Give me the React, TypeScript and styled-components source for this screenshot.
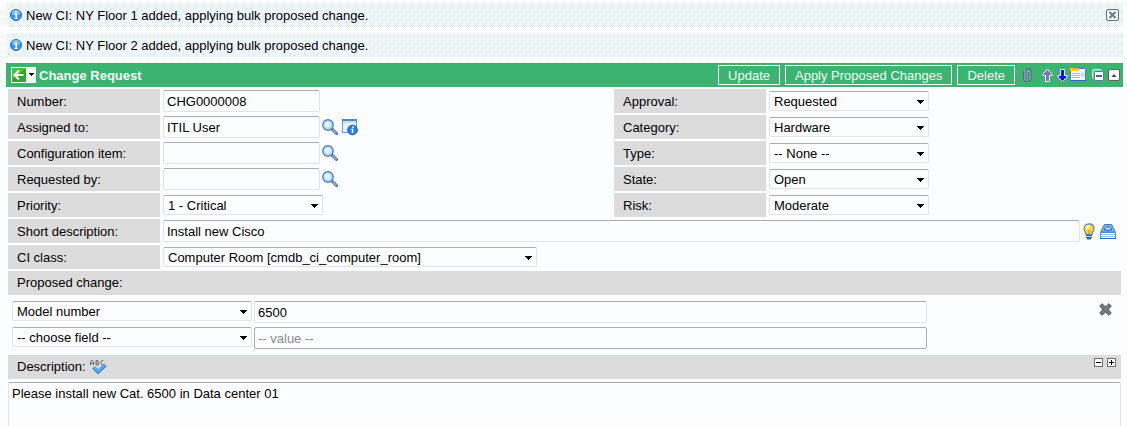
import React from "react";
import styled, { createGlobalStyle, css } from "styled-components";

const GlobalStyle = createGlobalStyle`
  *, *::before, *::after { box-sizing: border-box; }
  body {
    margin: 0;
    background: #fcfdff;
    color: #000;
    font: 13px/16px "Liberation Sans", Arial, sans-serif;
  }
`;

const Page = styled.div`
  display: flex;
  flex-direction: column;
  height: 100vh;
  overflow: hidden;
  padding: 3px 4px 0 6px;
`;

const Message = styled.div`
  display: flex;
  align-items: center;
  flex: none;
  gap: 4px;
  height: 24px;
  margin-bottom: 6px;
  padding: 0 4px;
  background: repeating-conic-gradient(#e2f1f9 0 25%, #fcfdff 0 50%) 0 0 / 2px 2px;
`;

const MessageText = styled.span`
  flex: 1;
  padding-top: 2px;
`;

const IconButton = styled.button`
  display: flex;
  flex: none;
  padding: 0;
  border: 0;
  background: none;
  cursor: pointer;
`;

const Header = styled.header`
  display: flex;
  align-items: center;
  flex: none;
  height: 24px;
  padding: 0 1px 0 5px;
  background: #3cb371;
  color: #fff;
`;

const Title = styled.h1`
  flex: 1;
  margin: 0 0 0 3px;
  padding-top: 1px;
  font-size: 13px;
  line-height: 24px;
  color: #f0fff6;
`;

const Actions = styled.div`
  display: flex;
  align-items: center;
  gap: 5px;
`;

const ActionButton = styled.button`
  height: 20px;
  padding: 1px 9px 0;
  border: 1px solid #fff;
  background: transparent;
  color: #eafff2;
  font: 13px/17px "Liberation Sans", Arial, sans-serif;
  white-space: nowrap;
  cursor: pointer;
`;

const Tools = styled.div`
  display: flex;
  align-items: center;
  gap: 4px;
`;

const ToolGroup = styled.div`
  display: flex;
  align-items: center;
`;

const Form = styled.form`
  display: flex;
  flex: 1;
  flex-direction: column;
  gap: 2px;
  min-height: 0;
  padding: 2px 2px 0;
`;

const Columns = styled.div`
  display: grid;
  grid-template-columns: minmax(0, 1fr) 507px;
`;

const Column = styled.div`
  display: flex;
  flex-direction: column;
  gap: 2px;
`;

const Row = styled.div`
  display: flex;
  flex: none;
  align-items: center;
  height: 24px;
`;

const labelBand = css`
  height: 24px;
  padding-left: 9px;
  background: #dcdcdc;
  line-height: 24px;
`;

const Label = styled.label`
  ${labelBand}
  flex: none;
  width: 152px;
  margin-right: 3px;
  padding-top: 1px;
`;

const Band = styled.div`
  ${labelBand}
  display: flex;
  flex: none;
  gap: 4px;
  padding-right: 5px;
`;

const BandTitle = styled.label`
  flex: none;
`;

const BandSpacer = styled.span`
  flex: 1;
`;

const fieldBorder = css`
  border: 1px solid #e0e3ea;
  border-top-color: #abadb3;
  border-radius: 2px;
  background: #fcfdff;
  color: #000;
  font: 13px/16px "Liberation Sans", Arial, sans-serif;
`;

const Input = styled.input<{ $width?: string; $outlined?: boolean }>`
  ${fieldBorder}
  width: ${(p) => p.$width ?? "157px"};
  height: 22px;
  min-width: 0;
  padding: 1px 3px 0;
  ${(p) => p.$outlined && "border-color: #abadb3;"}
  &::placeholder { color: #8a8a8a; opacity: 1; }
`;

const SelectBox = styled.span<{ $width: number }>`
  position: relative;
  flex: none;
  width: ${(p) => p.$width}px;
  height: 20px;
`;

const SelectControl = styled.select`
  ${fieldBorder}
  appearance: none;
  display: block;
  width: 100%;
  height: 20px;
  padding: 2px 16px 0 4px;
`;

const SelectArrow = styled.svg`
  position: absolute;
  top: 9px;
  right: 5px;
  pointer-events: none;
`;

const FieldIcons = styled.span`
  display: flex;
  gap: 2px;
  margin-left: 2px;
`;

const DescriptionIcons = styled.span`
  display: flex;
  flex: none;
  gap: 5px;
  padding: 0 5px 0 3px;
`;

const Changes = styled.div`
  display: flex;
  flex: none;
  flex-direction: column;
  gap: 4px;
  padding: 4px 9px 4px 4px;
`;

const ChangeRow = styled.div`
  display: grid;
  grid-template-columns: 240px minmax(0, 1fr) 13px;
  column-gap: 2px;
  height: 22px;
`;

const ChangeValue = styled.span`
  display: flex;
  padding-right: 170px;
`;

const DescriptionText = styled.textarea`
  ${fieldBorder}
  display: block;
  flex: 1 0 60px;
  width: 100%;
  margin-top: 1px;
  padding: 3px;
  border-bottom: 0;
  border-bottom-left-radius: 0;
  border-bottom-right-radius: 0;
  resize: none;
`;

function Select({ id, width, value, label }: { id: string; width: number; value: string; label?: string }) {
  return (
    <SelectBox $width={width}>
      <SelectControl id={id} name={id} aria-label={label} defaultValue={value}>
        <option>{value}</option>
      </SelectControl>
      <SelectArrow width="7" height="4" viewBox="0 0 7 4" shapeRendering="crispEdges" aria-hidden>
        <path d="M0 0h7v1H6v1H5v1H4v1H3V3H2V2H1V1H0z" />
      </SelectArrow>
    </SelectBox>
  );
}

const InfoIcon = () => (
  <svg width="12" height="12" viewBox="0 0 12 12" aria-hidden>
    <circle cx="6" cy="6" r="5.5" fill="#3d95e6" stroke="#2271c4" />
    <path d="M2 5a4 4 0 0 1 8 0c-2 1.500-6 1.500-8 0z" fill="#7dbdf5" />
    <path d="M5 2h2v1.500H5zM4.500 4.500H7V9h1v1H4.500V9h1V5.500h-1z" fill="#fff" />
  </svg>
);

const CloseIcon = () => (
  <svg width="13" height="12" viewBox="0 0 13 12" aria-hidden>
    <rect x=".5" y=".5" width="12" height="11" rx="1.500" fill="#f4f7f8" stroke="#5c6f7c" />
    <path d="M3.500 3l6 6M9.500 3l-6 6" stroke="#6b7b86" strokeWidth="2" />
  </svg>
);

const BackIcon = () => (
  <svg width="25" height="16" viewBox="0 0 25 16" aria-hidden>
    <path fill="#fff" d="M0 0h25v16H0z" />
    <path fill="#2ca82c" d="M1 1h14v14H1z" />
    <path fill="#63cf4e" d="M1 1h14L1 13z" opacity=".6" />
    <path d="M8 3.500L3.500 8 8 12.500M4 8h8.500" fill="none" stroke="#fff" strokeWidth="2" />
    <path d="M18 6h5v1h-1v1h-1v1h-1V8h-1V7h-1z" shapeRendering="crispEdges" />
  </svg>
);

const ClipIcon = () => (
  <svg width="16" height="16" viewBox="0 0 16 16" fill="none" aria-hidden>
    <rect x="3.500" y="2" width="8" height="12.500" rx="4" fill="#8fb4b4" opacity=".7" />
    <path d="M3.500 4.500v6.500a3.800 3.500 0 0 0 7.600 0V4.500a2.600 2.600 0 0 0-5.200 0V10.500a1.300 1.500 0 0 0 2.700 0V5" stroke="#54648c" strokeWidth="1.100" />
  </svg>
);

const UpIcon = () => (
  <svg width="16" height="16" viewBox="0 0 16 16" aria-hidden>
    <path d="M7.500 2L12 7v1.500H9.500v6h-4v-6H3V7z" fill="#7b72c4" stroke="#fff" />
  </svg>
);

const DownIcon = () => (
  <svg width="14" height="16" viewBox="0 0 14 16" aria-hidden>
    <path d="M6.500 14.500L11 10V8.500H8.500v-6h-4v6H2V10z" fill="#1414f0" stroke="#fff" />
  </svg>
);

const FormIcon = () => (
  <svg width="16" height="16" viewBox="0 0 16 16" aria-hidden>
    <rect x=".5" y="1.500" width="15" height="12" rx="1" fill="#eef6ff" stroke="#4b79cf" />
    <path fill="#ffc54d" d="M0 1h9v3H0z" />
    <path fill="#ff9b2e" d="M3 1h6v1H3z" />
    <path fill="#fff" d="M9 2h6v2H9z" />
    <path d="M2 6.500h8M11 6.500h3M2 8.500h8M11 8.500h3M2 10.500h8" stroke="#a3c0ec" />
    <path d="M0 13.500h16" stroke="#3a5fd0" />
  </svg>
);

const CollapseIcon = () => (
  <svg width="16" height="16" viewBox="0 0 16 16" aria-hidden>
    <rect x="2.500" y="2.500" width="9" height="9" rx="1" fill="#6fc397" stroke="#d5ecec" />
    <rect x="4.500" y="4.500" width="9" height="9" rx="1" fill="#fafcff" stroke="#5b8090" />
    <path d="M6 9h6" stroke="#4c6c7c" strokeWidth="2" />
  </svg>
);

const ToggleIcon = () => (
  <svg width="16" height="16" viewBox="0 0 16 16" aria-hidden>
    <rect x="2.500" y="2.500" width="11" height="11" rx="1.500" fill="#f7f7f7" stroke="#69605a" />
    <path d="M5.500 10L8 7l2.500 3z" fill="#444" />
  </svg>
);

const LookupIcon = () => (
  <svg width="17" height="17" viewBox="0 0 17 17" aria-hidden>
    <path d="M10 10l4.500 4.500" stroke="#4a6794" strokeWidth="3" strokeLinecap="round" />
    <path d="M10.500 10.500l4 4" stroke="#a4bbd8" strokeWidth="1.200" />
    <circle cx="6" cy="6" r="5.200" fill="#b9e0fb" stroke="#5580c0" strokeWidth="1.400" />
    <circle cx="5.500" cy="5.500" r="2.800" fill="#e4f5ff" />
  </svg>
);

const RecordIcon = () => (
  <svg width="17" height="17" viewBox="0 0 17 17" aria-hidden>
    <rect x="1.500" y="1.500" width="14" height="12" fill="#eaf3fc" stroke="#6a9bd4" />
    <path fill="#4f88cf" d="M1 0h15v2H1z" />
    <path fill="#c9e0f6" d="M2 2h13v2H2z" />
    <circle cx="11.500" cy="11" r="4.800" fill="#2a83e0" stroke="#195fb4" />
    <path d="M11 7.500h2v1.300h-2zM10.300 9.800h2.200l-.5 3h.8v1h-2.300l.6-3h-.8z" fill="#fff" />
  </svg>
);

const BulbIcon = () => (
  <svg width="12" height="17" viewBox="0 0 12 17" aria-hidden>
    <path d="M6 .8c3 0 5 2 5 4.700 0 2.500-2 3.500-2 6H3c0-2.500-2-3.500-2-6C1 2.800 3 .8 6 .8z" fill="#ffd43c" stroke="#5484bd" strokeWidth="1.200" />
    <path d="M4 2.500c2-1 3.500 0 2.500 2S4 7 3 6s-.5-3 1-3.500z" fill="#fff6b0" />
    <path d="M5 7l1 4 1-4" fill="none" stroke="#ee9e20" />
    <path fill="#3568a5" d="M3 12h6v1H3zM3 14h6v1H3zM4 15h4v1.500H4z" />
    <path fill="#b9d3ee" d="M3 13h6v1H3z" />
  </svg>
);

const DriveIcon = () => (
  <svg width="16" height="17" viewBox="0 0 16 17" aria-hidden>
    <path d="M4.500 1.500h7L15 8v1H1V8z" fill="#82b4ec" stroke="#3c78bd" />
    <path d="M4.500 7V5.500Q8 2 11.500 5.500V7z" fill="#c5dff8" stroke="#2b62a8" />
    <path fill="#f5fbff" stroke="#4f8fd0" d="M.5 9.500h15v6H.5z" />
    <path d="M1 11.500h14M1 13.500h14" stroke="#9cc8ee" />
    <path d="M0 15.500h16" stroke="#2f70bd" />
  </svg>
);

const DeleteIcon = () => (
  <svg width="13" height="13" viewBox="0 0 13 13" aria-hidden>
    <path d="M3 .7l3.500 3L10 .7 12.300 3 9.300 6.500l3 3.500L10 12.300l-3.500-3-3.500 3L.7 10l3-3.500L.7 3z" fill="#6c6c6c" stroke="#555" strokeWidth=".8" />
    <path d="M3 3l7 7M10 3l-7 7" stroke="#8c8c8c" />
  </svg>
);

const SpellIcon = () => (
  <svg width="17" height="15" viewBox="0 0 17 15" aria-hidden>
    <path d="M.5 5V2l1-1.500h1l1 1.500v3M.5 3.500h3M6 .5v4.500h2l1-1-1-1.300H6M8 2.700L8.700 1.500 8 .5H6M14 1.500l-1-1h-1l-1 1.300v2l1 1.200h1l1-1" fill="none" stroke="#666" />
    <path d="M3.500 7.500L8 11.800 15.500 5" fill="none" stroke="#2f7fd0" strokeWidth="3.600" />
    <path d="M3.700 7.200L8 11.200l7-6.400" fill="none" stroke="#58b6f8" strokeWidth="2" />
  </svg>
);

const SizeIcon = ({ plus }: { plus?: boolean }) => (
  <svg width="9" height="9" viewBox="0 0 9 9" shapeRendering="crispEdges" aria-hidden>
    <path fill="#707070" d="M0 0h9v9H0z" />
    <path fill="#fff" d="M1 1h7v7H1z" />
    <path d={plus ? "M2 4h5v1H2zM4 2h1v5H4z" : "M2 4h5v1H2z"} />
  </svg>
);

const SizeButtons = styled.span`
  display: flex;
  gap: 4px;
  padding-top: 3px;
`;

const BandIconButton = styled(IconButton)`
  align-self: center;
`;

const SizeButton = styled(IconButton)`
  height: 9px;
`;

const RemoveButton = styled(IconButton)`
  align-self: start;
  padding-top: 2px;
`;

const Lookup = ({ label }: { label: string }) => (
  <IconButton type="button" aria-label={label}>
    <LookupIcon />
  </IconButton>
);

const rightFields = [
  ["approval", "Approval:", "Requested"],
  ["category", "Category:", "Hardware"],
  ["type", "Type:", "-- None --"],
  ["state", "State:", "Open"],
  ["risk", "Risk:", "Moderate"],
];

export default function App() {
  return (
    <>
      <GlobalStyle />
      <Page>
        <Message>
          <InfoIcon />
          <MessageText>New CI: NY Floor 1 added, applying bulk proposed change.</MessageText>
          <IconButton type="button" aria-label="Close messages"><CloseIcon /></IconButton>
        </Message>
        <Message>
          <InfoIcon />
          <MessageText>New CI: NY Floor 2 added, applying bulk proposed change.</MessageText>
        </Message>
        <Header>
          <IconButton type="button" aria-label="Back"><BackIcon /></IconButton>
          <Title>Change Request</Title>
          <Actions>
            <ActionButton type="button">Update</ActionButton>
            <ActionButton type="button">Apply Proposed Changes</ActionButton>
            <ActionButton type="button">Delete</ActionButton>
            <Tools>
              <IconButton type="button" aria-label="Attachments"><ClipIcon /></IconButton>
              <ToolGroup>
                <IconButton type="button" aria-label="Previous record"><UpIcon /></IconButton>
                <IconButton type="button" aria-label="Next record"><DownIcon /></IconButton>
                <IconButton type="button" aria-label="Form sections"><FormIcon /></IconButton>
              </ToolGroup>
              <ToolGroup>
                <IconButton type="button" aria-label="Collapse all"><CollapseIcon /></IconButton>
                <IconButton type="button" aria-label="Toggle section"><ToggleIcon /></IconButton>
              </ToolGroup>
            </Tools>
          </Actions>
        </Header>
        <Form>
          <Columns>
            <Column>
              <Row>
                <Label htmlFor="number">Number:</Label>
                <Input id="number" defaultValue="CHG0000008" />
              </Row>
              <Row>
                <Label htmlFor="assigned">Assigned to:</Label>
                <Input id="assigned" defaultValue="ITIL User" />
                <FieldIcons>
                  <Lookup label="Look up user" />
                  <IconButton type="button" aria-label="View user"><RecordIcon /></IconButton>
                </FieldIcons>
              </Row>
              <Row>
                <Label htmlFor="item">Configuration item:</Label>
                <Input id="item" />
                <FieldIcons><Lookup label="Look up configuration item" /></FieldIcons>
              </Row>
              <Row>
                <Label htmlFor="requested">Requested by:</Label>
                <Input id="requested" />
                <FieldIcons><Lookup label="Look up requester" /></FieldIcons>
              </Row>
              <Row>
                <Label htmlFor="priority">Priority:</Label>
                <Select id="priority" width={160} value="1 - Critical" />
              </Row>
            </Column>
            <Column>
              {rightFields.map(([id, label, value]) => (
                <Row key={id}>
                  <Label htmlFor={id}>{label}</Label>
                  <Select id={id} width={160} value={value} />
                </Row>
              ))}
            </Column>
          </Columns>
          <Row>
            <Label htmlFor="short">Short description:</Label>
            <Input id="short" $width="100%" defaultValue="Install new Cisco" />
            <DescriptionIcons>
              <IconButton type="button" aria-label="Suggestions"><BulbIcon /></IconButton>
              <IconButton type="button" aria-label="Search knowledge"><DriveIcon /></IconButton>
            </DescriptionIcons>
          </Row>
          <Row>
            <Label htmlFor="class">CI class:</Label>
            <Select id="class" width={374} value="Computer Room [cmdb_ci_computer_room]" />
          </Row>
          <Band>Proposed change:</Band>
          <Changes>
            <ChangeRow>
              <Select id="field1" width={240} value="Model number" label="Field" />
              <ChangeValue><Input $width="100%" defaultValue="6500" aria-label="Value" /></ChangeValue>
              <RemoveButton type="button" aria-label="Remove change"><DeleteIcon /></RemoveButton>
            </ChangeRow>
            <ChangeRow>
              <Select id="field2" width={240} value="-- choose field --" label="New field" />
              <ChangeValue><Input $width="100%" $outlined placeholder="-- value --" aria-label="New value" /></ChangeValue>
            </ChangeRow>
          </Changes>
          <Band>
            <BandTitle htmlFor="description">Description:</BandTitle>
            <BandIconButton type="button" aria-label="Check spelling"><SpellIcon /></BandIconButton>
            <BandSpacer />
            <SizeButtons>
              <SizeButton type="button" aria-label="Shrink"><SizeIcon /></SizeButton>
              <SizeButton type="button" aria-label="Grow"><SizeIcon plus /></SizeButton>
            </SizeButtons>
          </Band>
          <DescriptionText id="description" defaultValue="Please install new Cat. 6500 in Data center 01" />
        </Form>
      </Page>
    </>
  );
}
